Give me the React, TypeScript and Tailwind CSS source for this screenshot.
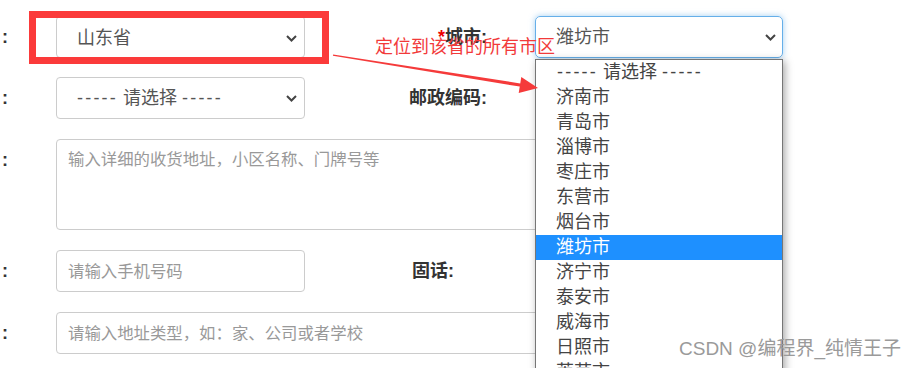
import React from "react";

const Chevron = () => (
  <svg width="11" height="7" viewBox="0 0 11 7" className="shrink-0">
    <path d="M1 1 L5.5 5.5 L10 1" fill="none" stroke="#444" strokeWidth="2" />
  </svg>
);

const Dashes = () => <span className="tracking-[2.2px]">-----</span>;

const Colon = () => (
  <div className="w-[56px] shrink-0 pl-[2px] text-[18px] font-bold text-[#333]">:</div>
);

const cities = [
  "济南市",
  "青岛市",
  "淄博市",
  "枣庄市",
  "东营市",
  "烟台市",
  "潍坊市",
  "济宁市",
  "泰安市",
  "威海市",
  "日照市",
  "莱芜市",
  "临沂市",
];

export default function App() {
  return (
    <div className="relative w-[915px] h-[368px] overflow-hidden bg-white font-['Liberation_Sans','Noto_Sans_CJK_SC',sans-serif] text-[#555]">
      <div className="flex flex-col pt-[16px]">
        {/* Row 1 */}
        <div className="flex items-center h-[42px]">
          <Colon />
          <div className="w-[249px] h-full flex items-center justify-between border border-[#ccc] rounded-[4px] pl-[20px] pr-[7px] pt-[2px] text-[18px] text-[#555]">
            <span>山东省</span>
            <Chevron />
          </div>
          <div className="w-[182px] text-right text-[18px] font-bold text-[#333]">
            <span className="text-[#e00]">*</span>城市:
          </div>
          <div className="ml-[48px] w-[248px] h-full flex items-center justify-between border border-[#66afe9] rounded-[5px] shadow-[0_0_6px_rgba(102,175,233,0.6)] pl-[20px] pr-[6px] text-[18px] text-[#555]">
            <span>潍坊市</span>
            <Chevron />
          </div>
        </div>
        {/* Row 2 */}
        <div className="flex items-center h-[42px] mt-[19px]">
          <Colon />
          <div className="w-[249px] h-full flex items-center justify-between border border-[#ccc] rounded-[4px] pl-[20px] pr-[7px] text-[18px] text-[#555]">
            <span>
              <Dashes /> 请选择 <Dashes />
            </span>
            <Chevron />
          </div>
          <div className="w-[182px] text-right text-[18px] font-bold text-[#333]">邮政编码:</div>
          <div className="ml-[48px] w-[248px] h-full border border-[#ccc] rounded-[4px]" />
        </div>
        {/* Row 3 */}
        <div className="flex items-start h-[91px] mt-[20px]">
          <div className="pt-[8px]">
            <Colon />
          </div>
          <textarea
            className="w-[727px] h-full resize-none border border-[#ccc] rounded-[4px] pl-[11px] pt-[7px] text-[16.4px] leading-[24px] outline-none placeholder:text-[#999]"
            placeholder="输入详细的收货地址，小区名称、门牌号等"
          />
        </div>
        {/* Row 4 */}
        <div className="flex items-center h-[42px] mt-[20px]">
          <Colon />
          <input
            className="w-[249px] h-full border border-[#ccc] rounded-[4px] pl-[11px] text-[16.4px] outline-none placeholder:text-[#999]"
            placeholder="请输入手机号码"
          />
          <div className="w-[182px] pr-[33px] text-right text-[18px] font-bold text-[#333]">固话:</div>
          <div className="ml-[48px] w-[248px] h-full border border-[#ccc] rounded-[4px]" />
        </div>
        {/* Row 5 */}
        <div className="flex items-center h-[42px] mt-[20px]">
          <Colon />
          <input
            className="w-[727px] h-full border border-[#ccc] rounded-[4px] pl-[11px] text-[16.4px] outline-none placeholder:text-[#999]"
            placeholder="请输入地址类型，如：家、公司或者学校"
          />
        </div>
      </div>

      {/* Dropdown list */}
      <div className="absolute left-[535px] top-[59px] w-[248px] border border-[#767676] bg-white shadow-[2px_2px_8px_rgba(0,0,0,0.35)] text-[18px] text-[#444]">
        <div className="h-[25px] flex items-center pl-[21px]">
          <span>
            <Dashes /> 请选择 <Dashes />
          </span>
        </div>
        {cities.map((c) => (
          <div
            key={c}
            className={
              c === "潍坊市"
                ? "h-[25px] flex items-center pl-[20px] bg-[#1e90ff] text-white"
                : "h-[25px] flex items-center pl-[20px]"
            }
          >
            {c}
          </div>
        ))}
      </div>

      {/* Red highlight rectangle */}
      <div className="absolute left-[29px] top-[11px] w-[300px] h-[53px] border-[7px] border-[#fb3a3a]" />

      {/* Annotation text */}
      <div className="absolute left-[375px] top-[37px] text-[18px] leading-[20px] text-[#f23a3a] whitespace-nowrap">
        定位到该省的所有市区
      </div>

      {/* Arrow */}
      <svg className="absolute left-0 top-0 pointer-events-none" width="915" height="368" viewBox="0 0 915 368">
        <polygon
          points="333.1,54.4 520.25,83.4 521.3,77.1 538,88 518.7,92.9 519.75,86.6 332.9,55.8"
          fill="#f53a3a"
        />
      </svg>

      {/* Watermark */}
      <div className="absolute left-[679px] top-[337px] text-[19px] leading-[24px] text-[#9a9a9a] whitespace-nowrap">
        CSDN @编程界_纯情王子
      </div>
    </div>
  );
}
